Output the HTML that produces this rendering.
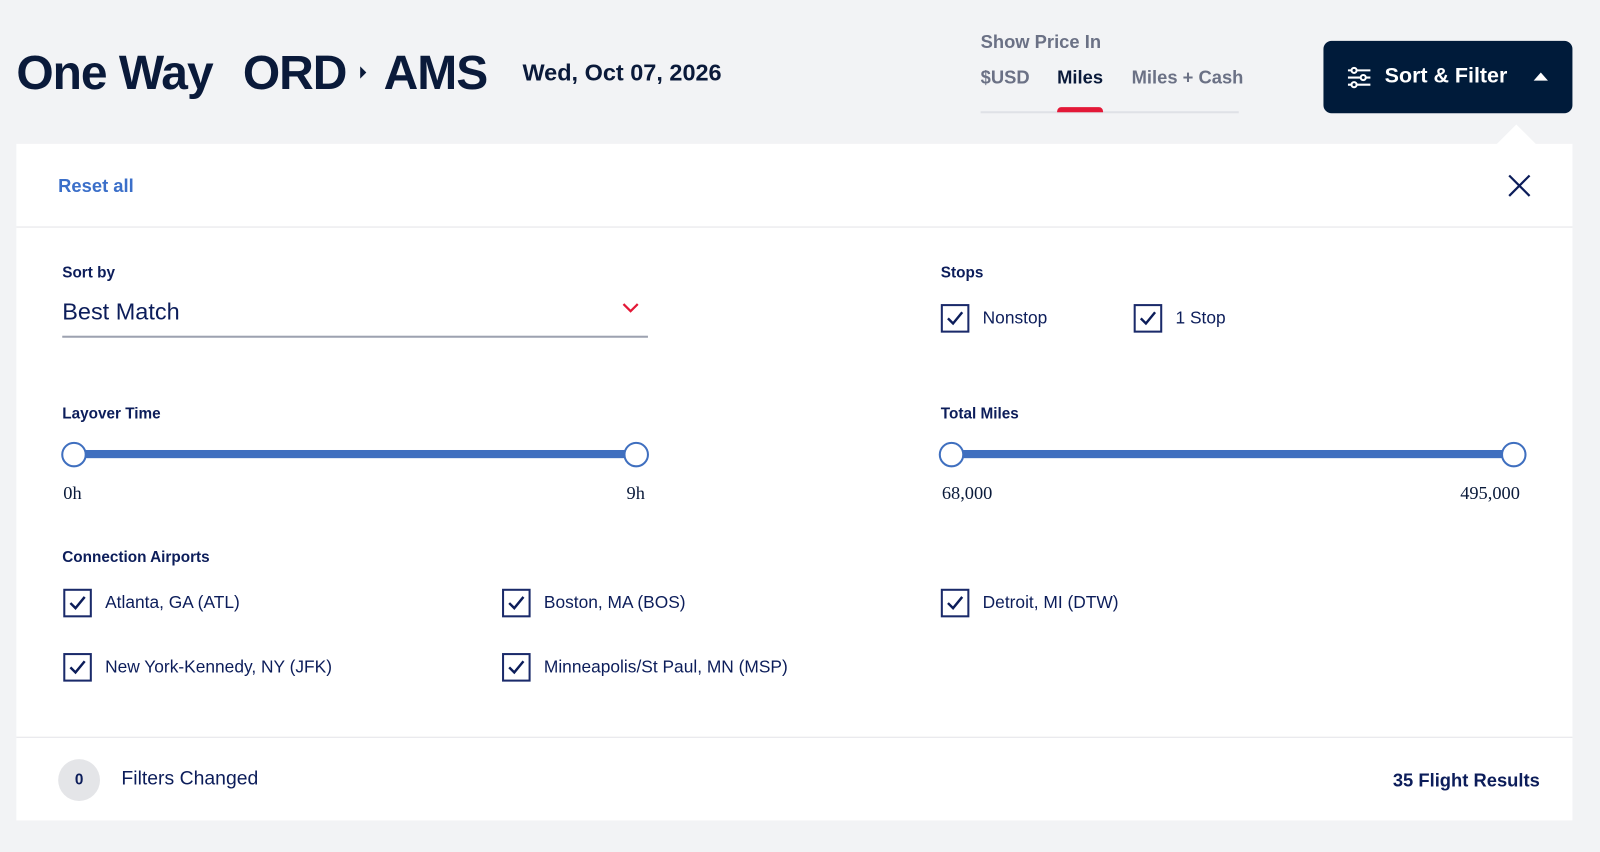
<!DOCTYPE html>
<html><head><style>
*{margin:0;padding:0;box-sizing:border-box}
body{width:1600px;height:852px;background:#f2f3f5;font-family:"Liberation Sans",sans-serif;color:#0c1d5a;position:relative;overflow:hidden}
#w{position:absolute;left:0;top:0;width:1568px;height:835px;transform:scale(1.0204);transform-origin:0 0}
.a{position:absolute;white-space:nowrap}
.h{color:#0a1a3a;font-weight:bold}
.lbl{font-size:15px;font-weight:bold;color:#0c1d5a}
.cb{position:absolute;width:28px;height:28px;border:2px solid #1a2a6a;background:#fff}
.cb svg{position:absolute;left:3px;top:3px}
.t{font-size:17px;color:#0c1d5a}
.knob{position:absolute;width:25px;height:25px;border-radius:50%;background:#fff;border:2px solid #3f6fbf}
.bar{position:absolute;height:8px;background:#3f6fbf}
.num{font-family:"Liberation Serif",serif;font-size:18px;color:#0a1a3a}
</style></head><body><div id="w">
<div class="a h" style="left:16px;top:43px;font-size:47px;letter-spacing:-1px">One Way</div>
<div class="a h" style="left:238px;top:43px;font-size:47px;letter-spacing:-1px">ORD</div>
<svg class="a" style="left:351px;top:63px" width="10" height="16"><path d="M2 2 L8 8 L2 14Z" fill="#0a1a3a"/></svg>
<div class="a h" style="left:376px;top:43px;font-size:47px;letter-spacing:-1px">AMS</div>
<div class="a h" style="left:512px;top:58px;font-size:23px">Wed, Oct 07, 2026</div>

<div class="a" style="left:961px;top:31px;font-size:18px;font-weight:bold;color:#6b7185">Show Price In</div>
<div class="a" style="left:961px;top:66px;font-size:18px;font-weight:bold;color:#6b7185">$USD</div>
<div class="a" style="left:1036px;top:66px;font-size:18px;font-weight:bold;color:#0a1a3a">Miles</div>
<div class="a" style="left:1109px;top:66px;font-size:18px;font-weight:bold;color:#6b7185">Miles + Cash</div>
<div class="a" style="left:961px;top:109px;width:253px;height:2px;background:#dfe1e6"></div>
<div class="a" style="left:1036px;top:105px;width:45px;height:5px;background:#e31837;border-radius:4px 4px 0 0"></div>

<div class="a" style="left:1297px;top:40px;width:244px;height:71px;background:#001b3a;border-radius:8px"></div>
<svg class="a" style="left:1320px;top:65px" width="24" height="22" fill="none" stroke="#fff" stroke-width="2"><path d="M1 4h22M1 11h22M1 18h22"/><circle cx="7" cy="4" r="2.5" fill="#001b3a"/><circle cx="16" cy="11" r="2.5" fill="#001b3a"/><circle cx="7" cy="18" r="2.5" fill="#001b3a"/></svg>
<div class="a" style="left:1357px;top:63px;font-size:21px;font-weight:bold;color:#fff">Sort &amp; Filter</div>
<svg class="a" style="left:1502px;top:70px" width="16" height="10"><path d="M1 9 L8 1 L15 9Z" fill="#fff"/></svg>
<svg class="a" style="left:1466px;top:122px" width="40" height="20"><path d="M0 20 L20 0 L40 20Z" fill="#fff"/></svg>

<div class="a" style="left:16px;top:141px;width:1525px;height:663px;background:#fff"></div>
<div class="a" style="left:16px;top:222px;width:1525px;height:1px;background:#e3e4e8"></div>
<div class="a" style="left:16px;top:722px;width:1525px;height:1px;background:#e3e4e8"></div>
<div class="a" style="left:57px;top:172px;font-size:18px;font-weight:bold;color:#3b6fc9">Reset all</div>
<svg class="a" style="left:1477px;top:170px" width="24" height="24" stroke="#0c1d5a" stroke-width="2.2"><path d="M2 2L22 22M22 2L2 22"/></svg>

<div class="a lbl" style="left:61px;top:259px">Sort by</div>
<div class="a" style="left:61px;top:292px;font-size:23px;color:#0c1d5a">Best Match</div>
<svg class="a" style="left:610px;top:297px" width="16" height="10" fill="none" stroke="#e31837" stroke-width="2.2"><path d="M1 1L8 8L15 1"/></svg>
<div class="a" style="left:61px;top:329px;width:574px;height:2px;background:#9da2b0"></div>

<div class="a lbl" style="left:922px;top:259px">Stops</div>
<div class="cb" style="left:922px;top:298px"><svg width="18" height="18" fill="none" stroke="#0c1d5a" stroke-width="2.4"><path d="M2 9L7 14L16 3"/></svg></div>
<div class="a t" style="left:963px;top:302px">Nonstop</div>
<div class="cb" style="left:1111px;top:298px"><svg width="18" height="18" fill="none" stroke="#0c1d5a" stroke-width="2.4"><path d="M2 9L7 14L16 3"/></svg></div>
<div class="a t" style="left:1152px;top:302px">1 Stop</div>

<div class="a lbl" style="left:61px;top:397px">Layover Time</div>
<div class="bar" style="left:72px;top:441px;width:552px"></div>
<div class="knob" style="left:60px;top:433px"></div>
<div class="knob" style="left:611px;top:433px"></div>
<div class="a num" style="left:62px;top:473px">0h</div>
<div class="a num" style="left:614px;top:473px">9h</div>

<div class="a lbl" style="left:922px;top:397px">Total Miles</div>
<div class="bar" style="left:933px;top:441px;width:552px"></div>
<div class="knob" style="left:920px;top:433px"></div>
<div class="knob" style="left:1471px;top:433px"></div>
<div class="a num" style="left:923px;top:473px">68,000</div>
<div class="a num" style="left:1431px;top:473px">495,000</div>

<div class="a lbl" style="left:61px;top:538px">Connection Airports</div>
<div class="cb" style="left:62px;top:577px"><svg width="18" height="18" fill="none" stroke="#0c1d5a" stroke-width="2.4"><path d="M2 9L7 14L16 3"/></svg></div>
<div class="a t" style="left:103px;top:581px">Atlanta, GA (ATL)</div>
<div class="cb" style="left:492px;top:577px"><svg width="18" height="18" fill="none" stroke="#0c1d5a" stroke-width="2.4"><path d="M2 9L7 14L16 3"/></svg></div>
<div class="a t" style="left:533px;top:581px">Boston, MA (BOS)</div>
<div class="cb" style="left:922px;top:577px"><svg width="18" height="18" fill="none" stroke="#0c1d5a" stroke-width="2.4"><path d="M2 9L7 14L16 3"/></svg></div>
<div class="a t" style="left:963px;top:581px">Detroit, MI (DTW)</div>
<div class="cb" style="left:62px;top:640px"><svg width="18" height="18" fill="none" stroke="#0c1d5a" stroke-width="2.4"><path d="M2 9L7 14L16 3"/></svg></div>
<div class="a t" style="left:103px;top:644px">New York-Kennedy, NY (JFK)</div>
<div class="cb" style="left:492px;top:640px"><svg width="18" height="18" fill="none" stroke="#0c1d5a" stroke-width="2.4"><path d="M2 9L7 14L16 3"/></svg></div>
<div class="a t" style="left:533px;top:644px">Minneapolis/St Paul, MN (MSP)</div>

<div class="a" style="left:57px;top:744px;width:41px;height:41px;border-radius:50%;background:#e4e5e8;text-align:center;line-height:41px;font-size:15px;font-weight:bold">0</div>
<div class="a" style="left:119px;top:753px;font-size:19px">Filters Changed</div>
<div class="a" style="left:1365px;top:755px;font-size:18px;font-weight:bold">35 Flight Results</div>
</div></body></html>
